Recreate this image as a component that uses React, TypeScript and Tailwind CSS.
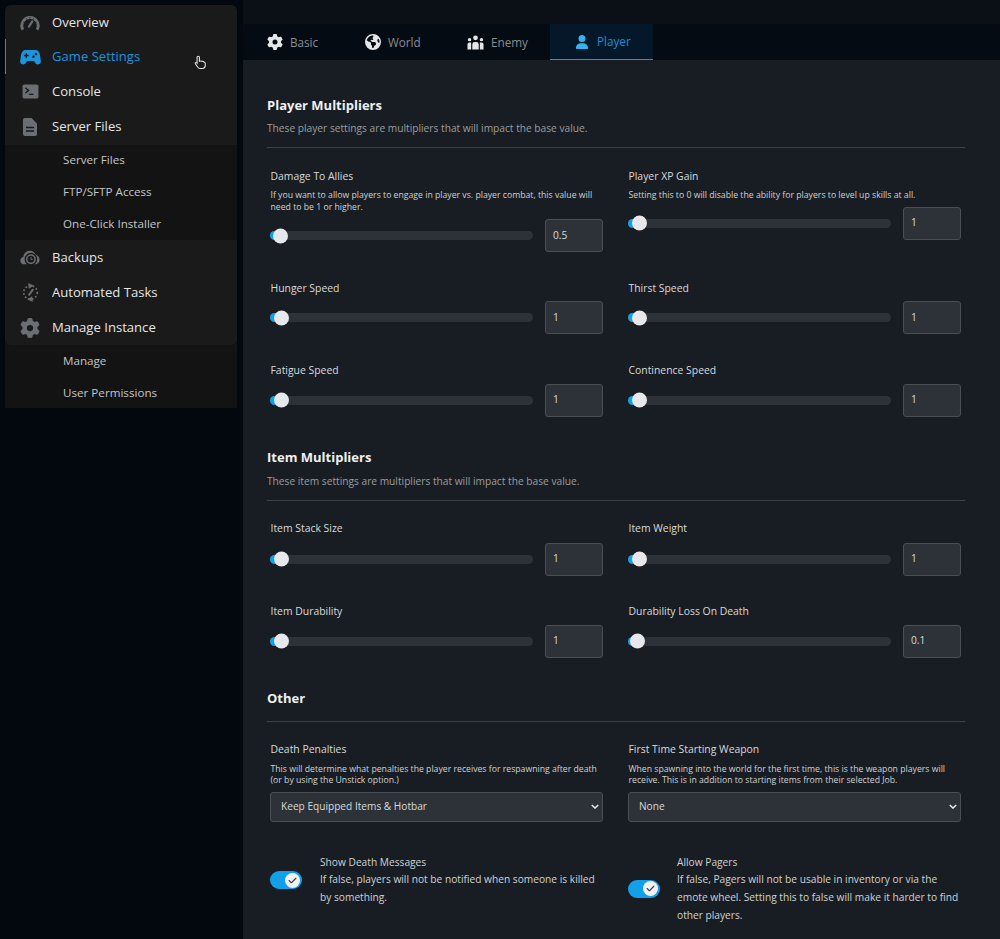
import React from "react";
import { FaGear, FaUser, FaEarthAmericas, FaCheck } from "react-icons/fa6";

const Gauge = () => (
  <svg viewBox="0 0 22 17" className="w-[20px] h-[16px]" fill="none" stroke="#6b6e72">
    <path d="M3.2 16 A9 9 0 1 1 18.8 16" strokeWidth="3.2" />
    <path d="M7 3.5 L7.6 4.6 M11 2 V3.4 M15 3.5 L14.4 4.6 M3.8 7.5 L5 8 M18.2 7.5 L17 8" stroke="#1a1a1a" strokeWidth="1" />
    <path d="M9.8 12.5 L13.6 6.8" strokeWidth="2.4" strokeLinecap="round" />
  </svg>
);
const Pad = () => (
  <svg viewBox="0 0 21 16" className="w-[21px] h-[16px]">
    <path d="M5.5 1 H15.5 C18 1 19.5 3 20 6 L20.8 11.5 C21.2 14 19.5 15.5 17.8 15.5 C16.5 15.5 15.5 14.8 14.8 13.5 L14 12 H7 L6.2 13.5 C5.5 14.8 4.5 15.5 3.2 15.5 C1.5 15.5 -0.2 14 0.2 11.5 L1 6 C1.5 3 3 1 5.5 1 Z" fill="#1a95dd" />
    <path d="M4 6.5 H8.6 M6.3 4.2 V8.8" stroke="#1a1a1a" strokeWidth="1.4" />
    <circle cx="13.4" cy="7.8" r="1.2" fill="#1a1a1a" />
    <circle cx="16" cy="5" r="1.2" fill="#1a1a1a" />
  </svg>
);
const Term = () => (
  <svg viewBox="0 0 18 16" className="w-[17px] h-[15px]">
    <rect width="17" height="15" x="0.5" y="0.5" rx="2" fill="#6b6e72" />
    <path d="M3.5 4 L7 6.8 L3.5 9.6" stroke="#1a1a1a" strokeWidth="1.4" fill="none" />
    <path d="M7.5 11 H12" stroke="#1a1a1a" strokeWidth="1.4" />
  </svg>
);
const FileIcon = () => (
  <svg viewBox="0 0 14 18" className="w-[14px] h-[18px]">
    <path d="M2 0 H8.5 L14 5.5 V16 A2 2 0 0 1 12 18 H2 A2 2 0 0 1 0 16 V2 A2 2 0 0 1 2 0 Z" fill="#6b6e72" />
    <path d="M3 9.5 H11 M3 13 H11" stroke="#1a1a1a" strokeWidth="1.5" />
  </svg>
);
const CloudClock = () => (
  <svg viewBox="0 0 22 17" className="w-[20px] h-[16px]">
    <path d="M5 15.5 C1.5 15.5 0 13 0.5 10.5 C1 8.5 2.4 7.7 3.6 7.5 C4 3 7.5 0.5 11 0.5 C14 0.5 16.5 2.5 17.3 5 C20 6 21.8 8 21.5 11 C21.2 13.8 19 15.5 17 15.5 Z" fill="#6b6e72" />
    <circle cx="12" cy="9.8" r="6.2" fill="#6b6e72" stroke="#1a1a1a" strokeWidth="1.5" />
    <circle cx="12" cy="9.8" r="3.7" fill="#1a1a1a" />
    <path d="M12 7.5 V10 H14" stroke="#6b6e72" strokeWidth="1.1" fill="none" />
  </svg>
);
const Tasks = () => (
  <svg viewBox="0 0 18 20" className="w-[17px] h-[19px]" fill="none" stroke="#6b6e72">
    <circle cx="9" cy="10" r="7.2" strokeWidth="1.8" strokeDasharray="1.8 2.2" />
    <path d="M7.5 12.5 L11.5 7" strokeWidth="2" strokeLinecap="round" />
    <path d="M7 0.5 L12 2.8 L7.5 5.5 Z" fill="#6b6e72" strokeWidth="0.6" />
    <path d="M11 19.5 L6 17.2 L10.5 14.5 Z" fill="#6b6e72" strokeWidth="0.6" />
  </svg>
);
const People = () => (
  <svg viewBox="0 0 18 15" className="w-[17px] h-[15px]" fill="#e4e6e8">
    <circle cx="9" cy="2.6" r="2.5" />
    <circle cx="2.7" cy="4.5" r="1.8" />
    <circle cx="15.3" cy="4.5" r="1.8" />
    <path d="M5.6 15 V9.6 A2.6 2.6 0 0 1 8.2 7 H9.8 A2.6 2.6 0 0 1 12.4 9.6 V15 Z" />
    <path d="M0.5 15 V9.6 A2 2 0 0 1 2.5 7.6 H4.4 V15 Z" />
    <path d="M17.5 15 V9.6 A2 2 0 0 0 15.5 7.6 H13.6 V15 Z" />
  </svg>
);

const NavItem = ({ icon, label, active = false, h }: { icon: React.ReactNode; label: string; active?: boolean; h: string }) => (
  <div className={`flex items-center ${h} ${active ? "text-[#1a95dd] border-l border-[#1a95dd]" : "text-[#e4e6e8] border-l border-transparent"}`}>
    <div className="w-[46px] pl-[2px] flex justify-center items-center shrink-0">{icon}</div>
    <span className="text-[13.1px] leading-none">{label}</span>
  </div>
);
const SubItem = ({ label, h }: { label: string; h: string }) => (
  <div className={`flex items-center pl-[58px] ${h} text-[11.65px] text-[#c3c6c9]`}>{label}</div>
);

const Slider = ({ pos }: { pos: number }) => (
  <div className="relative flex-1 h-[9px] rounded-full bg-[#2d3238]">
    <div className="absolute left-0 top-0 h-[9px] w-[12px] rounded-l-full bg-[#12a0e8]" />
    <div className="absolute top-1/2 -translate-y-1/2 w-[15px] h-[15px] rounded-full bg-[#e6e8ec]" style={{ left: pos }} />
  </div>
);

const Field = ({ label, desc, value, pos = 4, cls = "", single = false }: { label: string; desc?: React.ReactNode; value: string; pos?: number; cls?: string; single?: boolean }) => (
  <div className={cls}>
    <div className="text-[10.4px] leading-[17px] text-[#d8dadc] pl-[0.5px]">{label}</div>
    {desc && <div className="text-[8.7px] leading-[11.5px] text-[#d0d2d4] mt-[5px] pl-[0.5px]">{desc}</div>}
    <div className={`flex items-center gap-3 ${single ? "mt-[5px]" : desc ? "mt-[6px]" : "mt-[5px]"}`}>
      <Slider pos={pos} />
      <div className="w-[58px] h-[33px] rounded-[3px] border border-[#4a4f55] bg-[#2d3238] flex items-center pl-[7px] text-[10.2px] text-[#d8dadc]">{value}</div>
    </div>
  </div>
);

const Heading = ({ title, sub, subMt = "mt-[6px]" }: { title: string; sub?: string; subMt?: string }) => (
  <div className="border-b border-[#3d4146]">
    <div className="text-[13px] font-bold leading-[20px] text-[#eef0f2]">{title}</div>
    {sub ? <div className={`text-[10.2px] leading-[14px] text-[#9a9d9f] ${subMt} mb-[12px]`}>{sub}</div> : <div className="h-[13px]" />}
  </div>
);

const Toggle = () => (
  <div className="w-[32px] h-[18px] rounded-full bg-[#12a0e8] relative shrink-0">
    <div className="absolute right-[2px] top-[1.5px] w-[15px] h-[15px] rounded-full bg-[#f0f2f4] flex items-center justify-center">
      <FaCheck className="text-[#3a3f45] text-[9px]" />
    </div>
  </div>
);

const Select = ({ value }: { value: string }) => (
  <div className="mt-[5px] h-[30px] rounded-[3px] border border-[#4a4f55] bg-[#2d3238] flex items-center justify-between pl-[10px] pr-[3px] text-[10.15px] text-[#d8dadc]">
    <span>{value}</span>
    <svg viewBox="0 0 10 6" className="w-[8px] h-[5px]" fill="none" stroke="#e6e8ec" strokeWidth="1.8"><path d="M1 1 L5 5 L9 1" /></svg>
  </div>
);

const Tab = ({ icon, label, w, active = false }: { icon: React.ReactNode; label: string; w: string; active?: boolean }) => (
  <div className={`flex items-center gap-[7px] ${w} h-[36px] text-[11.7px] ${active ? "bg-[#04182a] text-[#1a8fd6] border-b border-[#1a95dd]" : "text-[#8a8d90]"}`}>
    {icon}
    <span className="pt-[1px]">{label}</span>
  </div>
);

export default function App() {
  return (
    <div className="relative w-[1000px] h-[939px] overflow-hidden flex bg-[#03070e]" style={{ fontFamily: '"Open Sans", sans-serif' }}>
      <aside className="w-[243px] pl-[5px] pr-[6px] pt-[5px] shrink-0">
        <div className="bg-[#131313] rounded-t-[6px]">
          <div className="bg-[#1a1a1a] rounded-[6px]">
            <NavItem h="h-[34px] pt-[1px]" icon={<Gauge />} label="Overview" />
            <NavItem h="h-[35px]" active icon={<Pad />} label="Game Settings" />
            <NavItem h="h-[34px] pt-[1px]" icon={<Term />} label="Console" />
            <NavItem h="h-[37px]" icon={<FileIcon />} label="Server Files" />
            <div className="bg-[#131313]">
              <SubItem h="h-[32px] pb-[2px]" label="Server Files" />
              <SubItem h="h-[32px] pb-[2px]" label="FTP/SFTP Access" />
              <SubItem h="h-[31px] pb-[2px]" label="One-Click Installer" />
            </div>
            <NavItem h="h-[35px]" icon={<CloudClock />} label="Backups" />
            <NavItem h="h-[34px] pt-[1px]" icon={<Tasks />} label="Automated Tasks" />
            <NavItem h="h-[36px] pt-[1px]" icon={<FaGear className="text-[#6b6e72] text-[20px]" />} label="Manage Instance" />
          </div>
          <SubItem h="h-[30px] pt-[2px]" label="Manage" />
          <SubItem h="h-[33px] pt-[2px]" label="User Permissions" />
        </div>
      </aside>
      <main className="flex-1 flex flex-col bg-[#0b1017]">
        <div className="h-[24px] shrink-0" />
        <div className="flex h-[36px] bg-[#050b12] rounded-t-[3px] shrink-0">
          <Tab w="w-[98px] pl-[24px]" icon={<FaGear className="text-[#e4e6e8] text-[16px]" />} label="Basic" />
          <Tab w="w-[102px] pl-[24px] gap-[6px]" icon={<FaEarthAmericas className="text-[#e4e6e8] text-[16px]" />} label="World" />
          <Tab w="w-[107px] pl-[24px] gap-[6px]" icon={<People />} label="Enemy" />
          <Tab w="w-[103px] pl-[25px] gap-[8px]" active icon={<FaUser className="text-[#34b4ee] text-[14px]" />} label="Player" />
        </div>
        <div className="flex-1 bg-[#181d23] pl-[24px] pr-[35px] pt-[35px]">
          <Heading title="Player Multipliers" sub="These player settings are multipliers that will impact the base value." />
          <div className="grid grid-cols-2 gap-x-[25px] pl-[3px] pr-[4px] mt-[19px]">
            <Field label="Damage To Allies" value="0.5" pos={3} cls="pt-[1px]" desc={<>If you want to allow players to engage in player vs. player combat, this value will need to be 1 or higher.</>} />
            <Field label="Player XP Gain" value="1" single cls="pt-[1px]" desc="Setting this to 0 will disable the ability for players to level up skills at all." />
            <Field label="Hunger Speed" value="1" cls="mt-[28px] [&>div:last-child]:mt-[4px]" />
            <Field label="Thirst Speed" value="1" cls="mt-[28px] [&>div:last-child]:mt-[4px]" />
            <Field label="Fatigue Speed" value="1" cls="mt-[27.5px]" />
            <Field label="Continence Speed" value="1" cls="mt-[27.5px]" />
          </div>
          <div className="mt-[30px]">
            <Heading title="Item Multipliers" subMt="mt-[7px]" sub="These item settings are multipliers that will impact the base value." />
          </div>
          <div className="grid grid-cols-2 gap-x-[25px] pl-[3px] pr-[4px] mt-[19px]">
            <Field label="Item Stack Size" value="1" cls="[&>div:last-child]:mt-[6px]" />
            <Field label="Item Weight" value="1" cls="[&>div:last-child]:mt-[6px]" />
            <Field label="Item Durability" value="1" cls="mt-[27px]" />
            <Field label="Durability Loss On Death" value="0.1" pos={2} cls="mt-[27px]" />
          </div>
          <div className="mt-[30px]">
            <Heading title="Other" />
          </div>
          <div className="grid grid-cols-2 gap-x-[25px] pl-[3px] pr-[4px] mt-[19px]">
            <div>
              <div className="text-[10.4px] leading-[17px] text-[#d8dadc] pl-[0.5px]">Death Penalties</div>
              <div className="text-[8.7px] leading-[11.5px] text-[#d0d2d4] mt-[6px] pl-[0.5px]">This will determine what penalties the player receives for respawning after death (or by using the Unstick option.)</div>
              <Select value="Keep Equipped Items & Hotbar" />
            </div>
            <div>
              <div className="text-[10.4px] leading-[17px] text-[#d8dadc] pl-[0.5px]">First Time Starting Weapon</div>
              <div className="text-[8.7px] leading-[11.5px] text-[#d0d2d4] mt-[6px] pl-[0.5px]">When spawning into the world for the first time, this is the weapon players will receive. This is in addition to starting items from their selected Job.</div>
              <Select value="None" />
            </div>
            <div className="flex items-center self-start mt-[32px] gap-[18px]">
              <Toggle />
              <div className="text-[10.2px] leading-[17.7px] text-[#d0d2d4]">Show Death Messages<br />If false, players will not be notified when someone is killed by something.</div>
            </div>
            <div className="flex items-center self-start mt-[32px] gap-[17px]">
              <Toggle />
              <div className="text-[10.2px] leading-[17.7px] text-[#d0d2d4]">Allow Pagers<br />If false, Pagers will not be usable in inventory or via the emote wheel. Setting this to false will make it harder to find other players.</div>
            </div>
          </div>
        </div>
      </main>
      <svg viewBox="0 0 24 24" className="absolute left-[193px] top-[53px] w-[14px] h-[18px]" fill="#1a1a1a" stroke="#e8e8e8" strokeWidth="1.8">
        <path d="M9 2 C10.5 2 11 3 11 4 V11 L13 10.5 C14 10 15 10.5 15.5 11 C17 10.5 18 11 18.5 12 C20 12 21 13 21 14 V18 C21 21 19 23 16 23 H12 C10 23 9 22 8 20.5 L4 15 C3 13.5 5 12 6.5 13.5 L7 14 V4 C7 3 8 2 9 2 Z" />
      </svg>
    </div>
  );
}
